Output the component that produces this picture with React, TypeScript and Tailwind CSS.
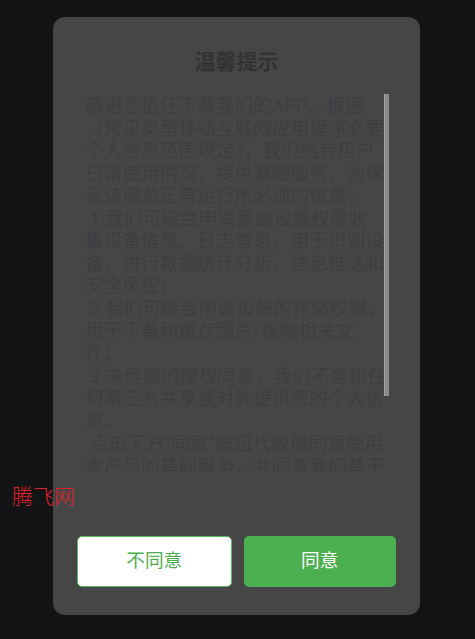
import React from 'react';

const lines = [
  '感谢您信任下载我们的APP。根据',
  '《常见类型移动互联网应用程序必要',
  '个人信息范围规定》，我们结合用户',
  '日常使用情况，提供基础服务，为保',
  '证该服务正常运行所必须的信息；',
  ' 1.我们可能会申请系统设备权限收',
  '集设备信息、日志信息，用于识别设',
  '备，进行数据统计分析、信息推送和',
  '安全风控；',
  ' 2.我们可能会申请设备的存储权限，',
  '用于下载和缓存图片/视频相关文',
  '件；',
  ' 3.未经您的授权同意，我们不会和任',
  '何第三方共享或对外提供您的个人信',
  '息。',
  ' 点击下方“同意”按钮代表你同意使用',
  '本产品的基础服务，并同意我们基于',
];

export default function App() {
  return (
    <div
      className="relative w-[475px] h-[639px] bg-[#131416] overflow-hidden"
      style={{ fontFamily: 'Roboto, "Noto Sans CJK SC", sans-serif' }}
    >
      <div className="ml-[53px] pt-[17px]">
        <div className="w-[367px] h-[598px] bg-[#464646] rounded-[12px] flex flex-col">
          <div className="h-[77px] pt-[31px] text-center text-[21px] leading-[28px] font-bold text-[#323232]">
            温馨提示
          </div>

          <div className="relative ml-[32px] w-[304px] h-[378px] overflow-hidden">
            <div className="pt-[1px] text-[18.7px] leading-[22.55px] text-[#3e3e42]">
              {lines.map((l, i) => (
                <div key={i} className="whitespace-pre h-[22.55px]">
                  {l}
                </div>
              ))}
            </div>
            {/* scrollbar thumb */}
            <div className="absolute right-0 top-0 w-[5px] h-[302px] bg-[#8b8b8b] border-l border-[#a0a0a0]" />
          </div>

          <div className="flex gap-[12px] px-[24px] mt-[64px]">
            <button className="flex-1 h-[51px] rounded-[5px] bg-white border border-[#5cb85f] text-[#4caf50] text-[18.7px]">
              不同意
            </button>
            <button className="flex-1 h-[51px] rounded-[5px] bg-[#4caf50] text-white text-[18.7px]">
              同意
            </button>
          </div>
        </div>
      </div>

      {/* watermark */}
      <div className="absolute left-[12px] top-[486px] text-[21px] leading-[22px] text-[#e0202c] font-light">
        腾飞网
      </div>
    </div>
  );
}
